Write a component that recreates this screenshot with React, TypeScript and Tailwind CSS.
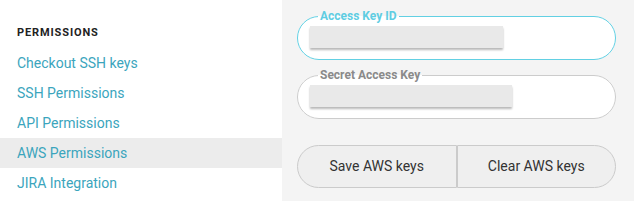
const links = [
  "Checkout SSH keys",
  "SSH Permissions",
  "API Permissions",
  "AWS Permissions",
  "JIRA Integration",
];

const KeyField = ({
  label,
  active,
  barWidth,
}: {
  label: string;
  active?: boolean;
  barWidth: string;
}) => (
  <fieldset
    className={
      "rounded-[22px] border bg-white px-[12px] pt-[3px] pb-[11px] " +
      (active ? "border-[#62d0e3]" : "border-[#cccccc]")
    }
  >
    <legend
      className={
        "ml-[8px] px-[2px] text-[12px] leading-[14px] font-bold " +
        (active ? "text-[#5fcde2]" : "text-[#8a8a8a]")
      }
    >
      {label}
    </legend>
    <div
      className={`${barWidth} h-[22px] bg-[#e9e9e9] shadow-[0_2px_2px_rgba(0,0,0,0.28)]`}
    />
  </fieldset>
);

export default function App() {
  return (
    <div className="flex h-[201px] w-[634px] overflow-hidden bg-white font-['Roboto',sans-serif]">
      <aside className="w-[282px] shrink-0 bg-white pt-[18px]">
        <div className="flex h-[30px] items-center px-[17px] text-[11px] font-bold tracking-[0.08em] text-[#222]">
          PERMISSIONS
        </div>
        <ul>
          {links.map((l) => (
            <li
              key={l}
              className={
                "flex h-[30px] items-center px-[17px] pt-[1px] text-[14px] text-[#3ba5bd] " +
                (l === "AWS Permissions" ? "bg-[#ececec]" : "")
              }
            >
              {l}
            </li>
          ))}
        </ul>
      </aside>
      <main className="flex flex-1 flex-col bg-[#f4f4f4] pt-[9px] pl-[15px] pr-[18px]">
        <KeyField label="Access Key ID" active barWidth="w-[193px]" />
        <div className="mt-[8px]">
          <KeyField label="Secret Access Key" barWidth="w-[202px]" />
        </div>
        <div className="mt-[26px] flex h-[43px]">
          <button className="flex-1 rounded-l-full border border-[#cbcbcb] bg-[#efefef] text-[14px] text-[#333]">
            Save AWS keys
          </button>
          <button className="flex-1 rounded-r-full border border-[#cbcbcb] bg-[#efefef] text-[14px] text-[#333]">
            Clear AWS keys
          </button>
        </div>
      </main>
    </div>
  );
}
